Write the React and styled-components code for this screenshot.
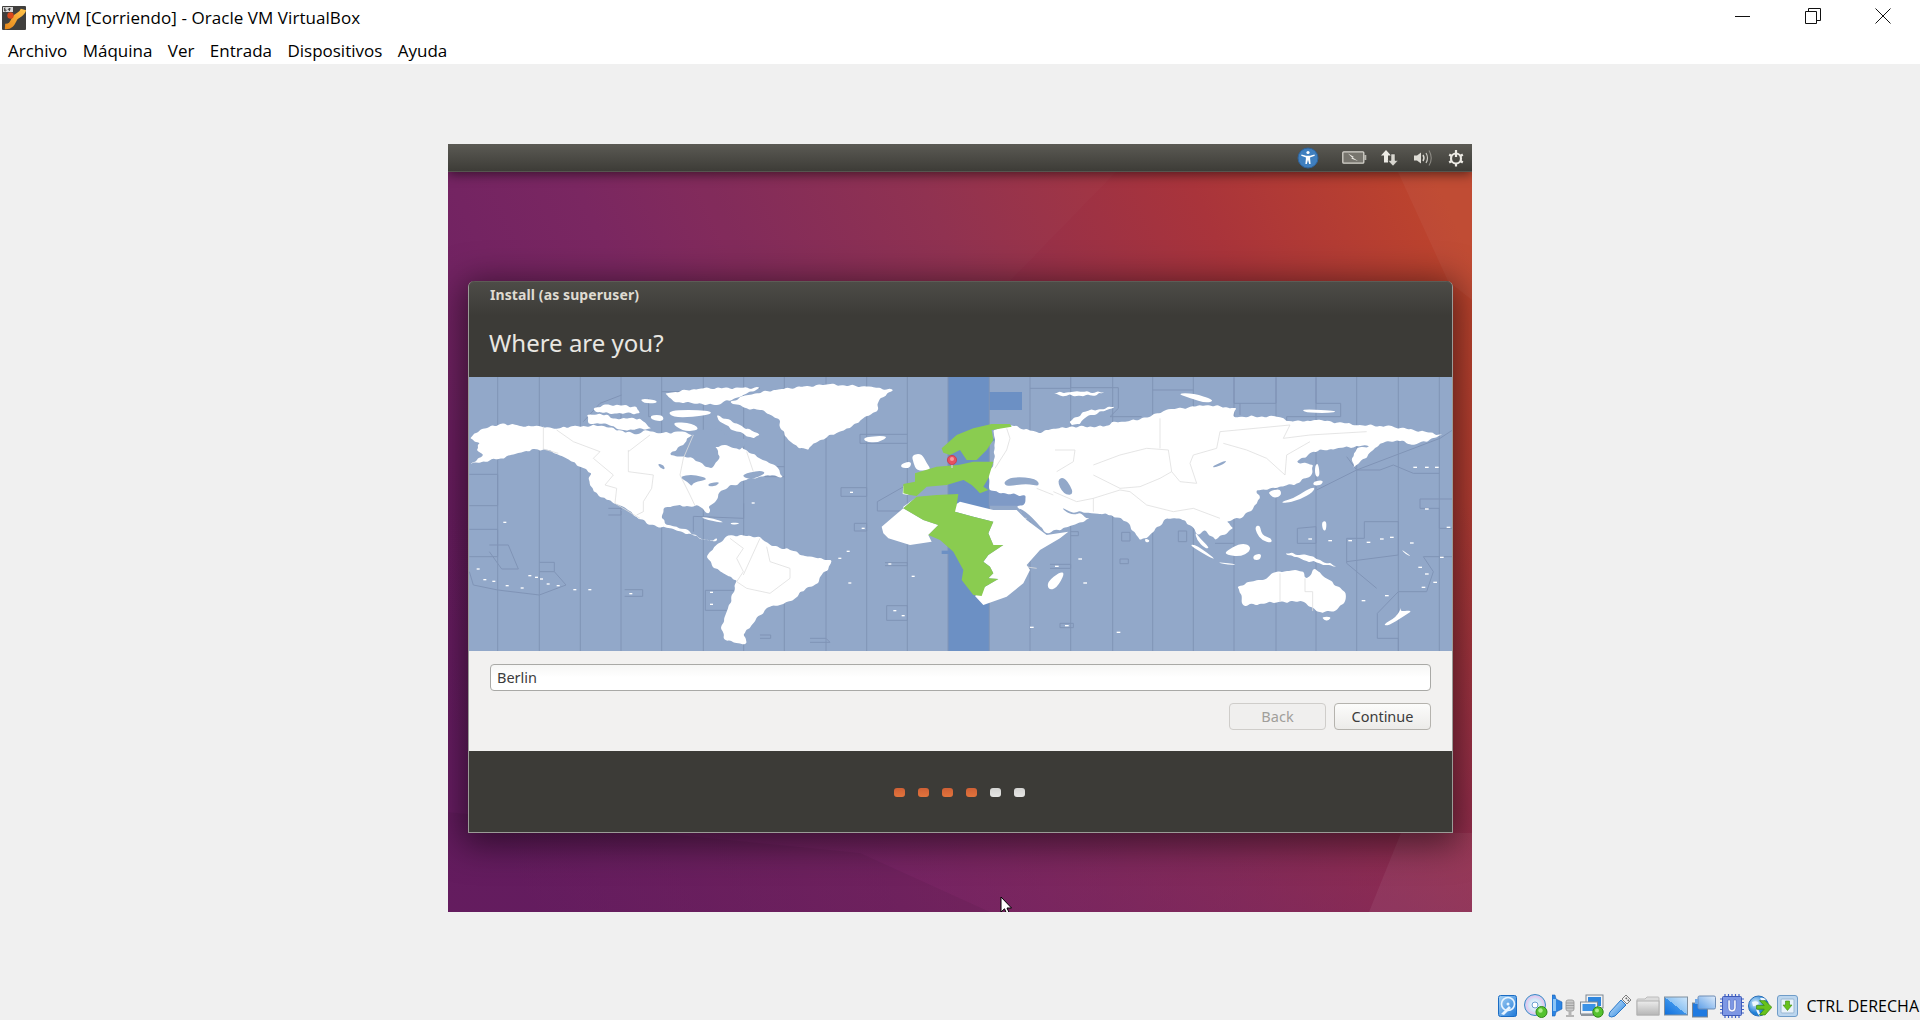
import React from "react";
import styled, { createGlobalStyle } from "styled-components";

const Global = createGlobalStyle`
  html, body { margin: 0; padding: 0; background: #f0f0f0; }
  #root { width: 1920px; height: 1020px; overflow: hidden; }
`;

const Page = styled.div`
  width: 1920px; height: 1020px; display: flex; flex-direction: column;
  background: #f0f0f0; font-family: "Open Sans", "Noto Sans", sans-serif; color: #000;
`;
const Header = styled.header`
  height: 64px; flex: none; background: #fff; display: flex; flex-direction: column;
`;
const TitleBar = styled.div`
  height: 35px; display: flex; align-items: center; padding: 0 0 0 2px; gap: 5px;
`;
const TitleText = styled.div`
  font-size: 17px; line-height: 22px; flex: 1; margin-top: 1px; letter-spacing: .06px;
`;
const WinButtons = styled.div`
  display: flex; margin-top: -3px; padding-right: 2px;
`;
const WinButton = styled.div`
  width: 70px; height: 32px; display: flex; align-items: center; justify-content: center;
`;
const MenuBar = styled.nav`
  display: flex; gap: 15.4px; padding-left: 8px; height: 29px; align-items: center;
`;
const MenuItem = styled.span`
  font-size: 17px; line-height: 22px; margin-top: 2px;
`;
const Stage = styled.main`
  flex: 1; display: flex; justify-content: center; padding-top: 80px;
`;
const Screen = styled.section`
  position: relative; width: 1024px; height: 768px; display: flex; flex-direction: column;
  font-family: "Noto Sans", "Open Sans", sans-serif; overflow: hidden; background: #7f2550;
`;
const Wallpaper = styled.svg`
  position: absolute; inset: 0; width: 100%; height: 100%;
`;
const Panel = styled.div`
  position: relative; height: 28px; flex: none; display: flex; align-items: center; justify-content: flex-end;
  background: linear-gradient(#5b5a54, #3d3c37);
  border-bottom: 1px solid #56554f; box-sizing: border-box;
  box-shadow: 0 2px 12px rgba(0,0,0,.55); padding-right: 7px; gap: 14px;
`;
const A11ySlot = styled.span`
  display: flex; margin-right: 9px;
`;
const Dialog = styled.div`
  position: relative; width: 985px; height: 552px; margin: 109px 0 0 20px; flex: none;
  display: flex; flex-direction: column; box-sizing: border-box;
  border-radius: 6px 6px 0 0; border: 1px solid #9b9b97; border-top: none;
  box-shadow: 0 6px 34px 6px rgba(0,0,0,.5); background: #3c3b37;
`;
const DialogHead = styled.div`
  height: 96px; flex: none; box-sizing: border-box; padding: 4px 0 0 21px;
  border-radius: 6px 6px 0 0; color: #e8e6e1;
  background: linear-gradient(#4d4c47 0, #3c3b37 34px);
  border-top: 1px solid #5d5c56;
`;
const WindowTitle = styled.div`
  font-size: 14px; font-weight: 700; line-height: 18px; letter-spacing: .1px; color: #dfdbd2;
`;
const Heading = styled.h1`
  margin: 23px 0 0 -1px; font-size: 24px; font-weight: 400; line-height: 32px; color: #e9e7e2;
`;
const MapFrame = styled.svg`
  display: block; width: 983px; height: 274px; flex: none; background: #92a8c9; filter: blur(.35px);
`;
const Form = styled.div`
  height: 100px; flex: none; box-sizing: border-box; background: #f2f1f0;
  padding: 13px 21px 0 21px; display: flex; flex-direction: column; gap: 12px;
`;
const Entry = styled.div`
  height: 27px; box-sizing: border-box; border: 1px solid #a9a9a6; border-radius: 4px;
  background: linear-gradient(#f6f6f5, #fff 50%); padding-left: 6px;
  font-size: 14.5px; line-height: 25px; color: #3c3c3c;
`;
const Buttons = styled.div`
  display: flex; justify-content: flex-end; gap: 8px;
`;
const Button = styled.div`
  width: 97px; height: 27px; box-sizing: border-box; border-radius: 4px; text-align: center;
  font-size: 14.5px; line-height: 25px;
  border: 1px solid ${p => (p.$disabled ? "#cfcdca" : "#b5b3ae")};
  color: ${p => (p.$disabled ? "#a09e9a" : "#3c3c3c")};
  background: ${p => (p.$disabled ? "#f0efee" : "linear-gradient(#fcfcfb, #ecebe9)")};
`;
const Footer = styled.div`
  flex: 1; display: flex; align-items: center; justify-content: center; gap: 13px; background: #3c3b37;
  padding-right: 3px; padding-top: 2px;
`;
const Dot = styled.span`
  width: 11px; height: 9px; border-radius: 3px;
  background: ${p => (p.$done ? "linear-gradient(#cf6035, #e2743c)" : "linear-gradient(#d4d4d2, #e6e6e4)")};
`;
const Cursor = styled.svg`
  position: absolute; left: 552px; top: 752px; width: 14px; height: 20px;
`;
const StatusBar = styled.footer`
  height: 35px; flex: none; display: flex; justify-content: flex-end; align-items: center; gap: 4px; padding-right: 1px;
`;
const StatusIcon = styled.svg`
  width: 24px; height: 24px; flex: none; margin-top: 6px;
`;
const HostKey = styled.span`
  font-size: 16px; line-height: 22px; margin: 7px 0 0 2px;
`;

const pts = a => a.flat().join(" ");

// coast: break each edge into short wobbling steps and round the corners
function coast(p, seed = 1) {
  const perimeter = p.reduce((s, a, i) => {
    const b = p[(i + 1) % p.length];
    return s + Math.hypot(b[0] - a[0], b[1] - a[1]);
  }, 0);
  const amp = perimeter > 300 ? 3 : 0;
  const out = [];
  p.forEach((a, i) => {
    const b = p[(i + 1) % p.length];
    const dx = b[0] - a[0], dy = b[1] - a[1], len = Math.hypot(dx, dy) || 1;
    const n = amp ? Math.max(1, Math.ceil(len / 11)) : 1;
    for (let k = 0; k < n; k++) {
      const t = k / n;
      const w = k === 0 ? 0 : amp * (Math.sin(k * 2.3 + i * 1.1 + seed) + Math.sin(k * 5.1 + i + seed) * .6);
      out.push([a[0] + dx * t - (dy / len) * w, a[1] + dy * t + (dx / len) * w]);
    }
  });
  const mid = (a, b) => [(a[0] + b[0]) / 2, (a[1] + b[1]) / 2];
  const f = v => v.toFixed(1);
  const first = mid(out[out.length - 1], out[0]);
  let d = `M${f(first[0])} ${f(first[1])}`;
  out.forEach((c, i) => {
    const m = mid(c, out[(i + 1) % out.length]);
    d += `Q${f(c[0])} ${f(c[1])} ${f(m[0])} ${f(m[1])}`;
  });
  return d + "Z";
}
const Land = ({ p, seed, f = "#fff" }) => <path d={coast(p, seed)} fill={f} />;
const Poly = ({ p, f = "#fff" }) => <polygon points={pts(p)} fill={f} />;

const zones = [497.7, 539.3, 580.3, 621, 661.7, 703.3, 743.7, 784.3, 826, 866.7, 907.3, 948, 989.3, 1030, 1070.7, 1112.7, 1152.7, 1193.3, 1234, 1276, 1316, 1356.7, 1398.3, 1439.3];

const leftJogs = [
  [[28,298],[113,298],[113,392],[28,392]], [[28,463],[113,463],[113,545],[28,545]], [[88,510],[145,510],[175,582],[125,582],[88,530]],
  [[238,562],[283,562],[283,590],[238,590]], [[28,590],[40,630],[113,645],[238,660],[318,630],[283,590]], [[445,400],[483,400],[483,420],[445,420]],
  [[494,644],[548,644],[548,664],[494,664]], [[736,646],[822,646]], [[736,646],[736,706],[800,706]], [[900,780],[932,780],[932,790],[900,790]],
  [[1050,790],[1098,790],[1110,802],[1050,802]], [[1143,338],[1220,338],[1220,364],[1143,364],[1143,338]], [[1252,380],[1340,330]], [[1252,380],[1252,408],[1340,408]],
  [[1183,445],[1220,445],[1220,468],[1183,468],[1183,445]], [[1275,563],[1342,563],[1342,572],[1275,572]], [[1280,692],[1342,692],[1342,736],[1280,736],[1280,692]],
  [[1200,178],[1342,178]], [[1200,178],[1200,205],[1342,205]], [[700,424],[851,430],[851,385]], [[700,424],[700,470]], [[370,140],[420,85],[485,60]], [[605,50],[730,50]],
  [[566,70],[566,125],[605,125]], [[851,40],[900,40]], [[915,275],[973,275]], [[915,275],[915,305],[973,305]],
];
const rightJogs = [
  [[210,40],[332,40]], [[332,8],[332,38],[475,38],[475,100],[450,125],[545,125]], [[578,45],[700,45]], [[822,8],[822,85],[948,85],[948,8]],
  [[1068,8],[1068,85],[1142,85],[1142,125],[980,125],[980,150]], [[840,85],[840,120]], [[1190,285],[1260,285],[1300,270],[1360,295],[1438,295]], [[1190,285],[1440,190],[1478,165]],
  [[1160,245],[1190,285]], [[1070,345],[1190,285]], [[1012,460],[1068,455],[1068,505],[1012,505],[1012,460]], [[1213,440],[1315,440],[1315,540],[1160,560]],
  [[1213,440],[1213,490],[1160,490],[1160,565],[1250,640]], [[1380,372],[1478,372]], [[1380,372],[1380,400],[1438,400],[1438,460],[1478,460]], [[1390,545],[1478,545]], [[1390,545],[1420,590],[1400,650],[1315,650]],
  [[1252,715],[1315,650]], [[1252,715],[1252,790],[1315,790],[1315,828]], [[300,745],[340,745],[340,758],[300,758],[300,745]], [[270,568],[332,568],[332,580],[270,580]],
  [[332,470],[355,470],[355,482],[332,482]], [[765,505],[822,505]], [[485,472],[510,472],[510,498],[485,498],[485,472]], [[655,468],[680,468],[680,500],[655,500],[655,468]],
  [[480,552],[505,552],[505,566],[480,566],[480,552]],
];

const leftLand = [
  [[30,190],[60,165],[125,145],[175,152],[245,155],[295,160],[330,155],[420,152],[480,165],[525,178],[560,165],[600,175],[660,170],[700,180],[760,170],[860,225],[900,250],[945,270],[970,305],[920,300],[860,315],[820,330],[780,350],[770,375],[745,395],[748,415],[735,410],[720,395],[650,392],[610,400],[605,430],[620,450],[650,455],[690,470],[720,490],[760,497],[772,490],[770,498],[745,497],[700,482],[640,462],[570,450],[530,425],[490,395],[440,375],[400,350],[385,310],[395,295],[360,275],[310,245],[260,225],[225,222],[170,235],[120,250],[30,268],[70,240],[50,225],[60,205]],
  [[380,120],[440,118],[460,130],[540,130],[575,160],[490,165],[430,145],[385,145]],
  [[400,100],[440,88],[530,95],[540,115],[470,115],[410,112]],
  [[540,70],[590,75],[590,85],[550,85]],
  [[615,55],[720,40],[900,38],[850,60],[770,90],[700,85],[640,80]],
  [[570,120],[610,120],[610,140],[575,135]],
  [[620,105],[750,105],[755,120],[640,130]],
  [[630,140],[700,145],[720,165],[670,170]],
  [[770,120],[840,150],[900,180],[880,190],[830,170],[780,140]],
  [[810,80],[860,60],[960,42],[1100,28],[1220,35],[1300,45],[1260,70],[1250,110],[1210,130],[1170,160],[1160,160],[1060,205],[1045,225],[1015,220],[985,195],[965,165],[955,130],[900,105],[850,98]],
  [[1210,185],[1290,182],[1255,203],[1215,200]],
  [[1355,240],[1385,235],[1400,265],[1415,285],[1370,288],[1360,262]],
  [[1325,265],[1355,258],[1350,280],[1322,278]],
  [[740,545],[770,510],[810,480],[900,485],[930,510],[990,525],[1040,545],[1115,555],[1105,585],[1085,600],[1075,625],[1020,650],[1005,670],[960,690],[930,695],[900,720],[880,745],[850,780],[860,805],[830,805],[790,790],[785,750],[800,710],[825,640],[830,615],[790,595],[755,570]],
  [[720,425],[760,430],[800,445],[740,435]], [[810,442],[845,445],[815,450]], [[735,395],[740,395],[745,412],[738,410]],
];
const leftWater = [
  [[630,235],[670,210],[680,190],[720,165],[770,160],[800,180],[830,190],[870,190],[840,225],[790,210],[765,215],[780,245],[755,280],[735,275],[700,250],[665,245],[640,240]],
  [[655,305],[700,298],[750,312],[700,322],[695,335],[685,322]], [[745,325],[780,320],[770,332],[745,335]], [[592,265],[612,270],[615,285],[600,278]],
  [[840,300],[900,285],[920,295],[870,315]], [[475,395],[505,425],[490,415]],
];
const leftBorders = [
  [[250,155],[250,222],[295,235]], [[290,165],[340,200],[420,230],[400,250],[460,300],[435,330],[470,340],[465,385]], [[505,225],[505,290],[580,300],[575,340],[550,380],[550,410],[530,420]],
  [[570,180],[505,230]], [[700,180],[670,250],[660,300],[690,360],[705,392]], [[465,385],[540,430]], [[810,490],[850,520],[830,550],[850,590],[830,620],[860,640],[930,655],[990,610],[990,580],[930,560],[920,515]],
  [[850,600],[900,490]], [[860,230],[880,290]],
];
const rightLand = [
  [[100,165],[150,150],[240,175],[265,165],[330,155],[430,155],[465,140],[500,140],[570,125],[620,105],[740,90],[830,100],[820,125],[950,125],[1000,140],[1070,135],[1200,150],[1300,155],[1450,180],[1360,210],[1310,195],[1260,205],[1240,225],[1180,280],[1175,250],[1190,220],[1240,210],[1130,220],[1060,230],[1010,260],[1060,270],[1055,300],[1010,325],[980,330],[920,345],[890,345],[900,370],[880,400],[850,425],[800,440],[820,460],[765,495],[735,465],[715,480],[690,450],[660,430],[620,430],[560,490],[540,495],[500,440],[455,420],[400,415],[340,410],[390,430],[340,450],[260,475],[170,395],[195,385],[197,362],[140,356],[88,345],[88,290],[100,265],[105,200]],
  [[328,140],[375,110],[465,95],[440,105],[380,125],[360,148],[335,150]], [[280,55],[340,50],[435,52],[400,62],[300,62]], [[650,55],[700,55],[765,75],[740,85],[690,70]],
  [[1025,102],[1140,108],[1100,115],[1035,112]], [[965,380],[1000,370],[1040,345],[1065,335],[1060,350],[1020,375],[970,385]], [[1060,320],[1090,315],[1085,330],[1060,332]], [[1065,270],[1075,265],[1080,305],[1065,305]],
  [[925,350],[960,340],[965,360],[945,370],[930,360]], [[885,455],[900,450],[905,480],[935,490],[935,505],[905,495],[890,475]], [[685,508],[710,510],[770,555],[745,545]], [[770,560],[840,570],[790,568]],
  [[795,530],[840,505],[870,510],[870,530],[840,545],[800,540]], [[880,540],[905,535],[900,555],[880,555]], [[975,535],[1040,540],[1130,575],[1080,565],[1030,555]], [[705,470],[720,490],[750,520],[735,520],[710,495]],
  [[555,490],[570,495],[565,503],[555,500]], [[262,620],[300,590],[315,595],[290,640],[265,645]],
  [[832,635],[870,620],[920,610],[935,595],[1000,585],[1030,590],[1040,610],[1065,580],[1100,610],[1155,650],[1155,680],[1120,710],[1070,710],[1030,680],[960,680],[850,692],[845,660]],
  [[1085,725],[1115,725],[1105,738],[1092,735]], [[1320,710],[1360,705],[1330,725],[1285,752],[1268,750],[1310,725],[1325,695]],
  [[1085,440],[1100,438],[1098,468],[1088,465]], [[1320,520],[1355,545],[1340,540]],
];
const rightWater = [
  [[130,320],[160,305],[230,310],[240,335],[200,325],[140,335]], [[290,315],[315,305],[345,360],[310,358]], [[755,275],[800,255],[795,265],[765,278]],
  [[300,395],[340,415],[365,415],[330,420]], [[170,395],[205,415],[255,470],[235,460],[195,425]],
];
const rightBorders = [
  [[140,160],[150,190],[140,225],[105,280]], [[285,225],[345,225],[340,260],[290,290]], [[400,270],[480,240],[560,220],[625,225],[635,290],[600,310],[540,335],[480,340],[400,300]],
  [[780,170],[770,220],[700,240],[690,265],[710,325],[660,320],[635,290]], [[790,205],[860,225],[920,250],[975,300],[980,240],[1050,200]], [[400,370],[480,345],[510,350],[560,390],[640,410],[700,400],[780,430]],
  [[600,130],[600,220]], [[780,170],[990,150],[970,190],[1050,180],[1220,170]], [[280,350],[350,380],[400,370],[400,410]], [[105,430],[200,430]], [[140,520],[160,570],[230,580]], [[960,595],[960,680]], [[1035,610],[1035,650],[1058,650],[1058,708]],
  [[230,340],[280,360]],
];
const bandWater = [
  [[95,185],[105,195],[60,222],[35,250],[20,255],[50,210]],
];
const medWater = [[88,340],[200,355],[200,392],[88,392]];
const euroGreen = [
  [[245,115],[290,75],[340,55],[395,42],[450,42],[455,50],[395,60],[400,90],[380,120],[350,150],[320,150],[300,120],[270,135],[250,128]],
  [[130,222],[165,215],[165,190],[230,170],[295,165],[340,155],[400,155],[385,205],[370,230],[385,240],[360,250],[340,230],[310,210],[260,225],[200,230],[170,258],[150,255],[130,250]],
  [[130,295],[170,260],[230,255],[295,252],[290,285],[285,305],[340,320],[400,335],[385,370],[400,405],[430,405],[385,435],[370,455],[390,470],[400,490],[385,505],[415,507],[375,530],[365,558],[340,555],[305,510],[310,480],[280,425],[240,390],[205,375],[235,345],[190,330]],
];
const euroWhite = [
  [[65,350],[100,320],[130,295],[190,330],[235,345],[205,375],[215,395],[150,405],[85,385],[70,370]], [[130,290],[165,265],[130,295]], [[130,228],[148,228],[145,255],[128,252]],
  [[285,285],[300,275],[400,300],[470,300],[500,330],[560,375],[625,365],[600,385],[540,420],[500,465],[510,480],[490,520],[440,560],[370,585],[345,558],[375,530],[415,507],[385,505],[400,490],[390,470],[370,455],[385,435],[430,405],[400,405],[385,370],[400,335],[340,320],[285,305]],
];

function WorldMap() {
  return (
    <MapFrame viewBox="469 377 983 274">
      <rect x="948" y="377" width="41" height="274" fill="#6c90c4" />
      <rect x="989" y="392" width="33" height="18" fill="#6c90c4" />
      {zones.map(x => <line key={x} x1={x} x2={x} y1="377" y2="651" stroke="#8094b6" strokeWidth="1" />)}
      <g transform="translate(460 375) scale(.33333)" fill="none" stroke="#8094b6" strokeWidth="3">
        {leftJogs.map((p, i) => <polyline key={i} points={pts(p)} />)}
      </g>
      <g transform="translate(960 375) scale(.33333)" fill="none" stroke="#8094b6" strokeWidth="3">
        {rightJogs.map((p, i) => <polyline key={i} points={pts(p)} />)}
      </g>
      <g transform="translate(460 375) scale(.33333)">
        {leftLand.map((p, i) => <Land key={i} p={p} seed={i + 1} />)}
        {leftWater.map((p, i) => <Land key={i} p={p} seed={i + 3} f="#92a8c9" />)}
        <g fill="none" stroke="#dedede" strokeWidth="2.4">
          {leftBorders.map((p, i) => <polyline key={i} points={pts(p)} />)}
        </g>
        <g fill="#fff">
          {[[70,612],[97,617],[137,630],[182,637],[205,600],[225,605],[240,610],[260,625],[290,630],[340,642],[385,642],[50,580],[130,440],[875,382],[1160,527],[1135,548],[1165,622],[1355,602],[1285,565],[1300,705],[1325,720],[750,650],[750,686],[508,654],[1205,458],[1170,350]].map(([x,y]) => <rect key={x+"-"+y} x={x} y={y} width="9" height="4" />)}
        </g>
      </g>
      <g transform="translate(960 375) scale(.33333)">
        <Poly p={medWater} f="#7f9ac6" />
        {bandWater.map((p, i) => <Poly key={i} p={p} f="#6c90c4" />)}
        {rightLand.map((p, i) => <Land key={i} p={p} seed={i + 5} />)}
        {rightWater.map((p, i) => <Land key={i} p={p} seed={i + 2} f="#92a8c9" />)}
        <g fill="none" stroke="#dedede" strokeWidth="2.4">
          {rightBorders.map((p, i) => <polyline key={i} points={pts(p)} />)}
        </g>
        <g fill="#fff">
          {[[1045,490],[1105,495],[1165,495],[1220,500],[1260,490],[1290,485],[1350,502],[1375,575],[1395,595],[1420,620],[1385,635],[1440,545],[1360,275],[1395,275],[1425,275],[1395,400],[1460,455],[1275,660],[1205,675],[355,550],[285,572],[370,622],[315,750],[470,770],[210,755]].map(([x,y]) => <rect key={x+"-"+y} x={x} y={y} width="11" height="4" />)}
        </g>
      </g>
      <g transform="translate(860 410) scale(.33333)">
        {euroWhite.map((p, i) => <Poly key={i} p={p} />)}
        {euroGreen.map((p, i) => <Poly key={i} p={p} f="#8acc50" />)}
        <polygon points="310,210 335,225 355,245 340,245 310,222" fill="#6c90c4" />
        <polygon points="245,432 268,432 268,422 245,422" fill="#6c90c4" />
      </g>
      <rect x="951.3" y="461" width="1.4" height="7" fill="#cfcfcf" />
      <circle cx="952" cy="460" r="4.6" fill="#e8505f" stroke="#c93a48" strokeWidth=".8" />
      <circle cx="952" cy="459" r="2" fill="#f59aa0" />
    </MapFrame>
  );
}

const DiskIcon = () => (
  <StatusIcon viewBox="0 0 24 24">
    <defs><linearGradient id="dk" x1="0" y1="0" x2="1" y2="1"><stop offset="0" stopColor="#a9d4f5" /><stop offset="1" stopColor="#1e78d8" /></linearGradient></defs>
    <rect x="2.5" y="1.5" width="18" height="21" rx="2" fill="url(#dk)" stroke="#1a6cc4" />
    <circle cx="12" cy="10" r="6.5" fill="none" stroke="#e8f4ff" strokeWidth="1.6" />
    <circle cx="12" cy="10" r="1.5" fill="#e8f4ff" />
    <path d="M5 20 L13 12 L15 14 L8 21 Z" fill="#e8f4ff" />
  </StatusIcon>
);
const CdIcon = () => (
  <StatusIcon viewBox="0 0 24 24">
    <defs><radialGradient id="cd"><stop offset="0" stopColor="#fff" /><stop offset=".6" stopColor="#cfe6f7" /><stop offset=".8" stopColor="#e5c9ef" /><stop offset="1" stopColor="#b6d6ee" /></radialGradient></defs>
    <circle cx="11" cy="11" r="10.5" fill="url(#cd)" stroke="#3f86c6" />
    <circle cx="11" cy="11" r="3" fill="#fff" stroke="#6aa0cf" />
    <circle cx="17.5" cy="18" r="5.5" fill="#55c22f" stroke="#2f8a18" />
    <circle cx="16.5" cy="16.5" r="2.2" fill="#b0ee8c" />
  </StatusIcon>
);
const AudioIcon = () => (
  <StatusIcon viewBox="0 0 24 24">
    <path d="M0 1 L3 1 L4 5 L10 8 L10 15 L4 18 L3 22 L0 22 Z" fill="#2c84e2" stroke="#1a62b8" strokeWidth=".6" />
    <rect x="1" y="5" width="3" height="12" fill="#8cc5f6" />
    <rect x="14" y="6" width="8" height="11" rx="2" fill="#c9c9c9" stroke="#a2a2a2" />
    <path d="M14 9h8M14 11.5h8M14 14h8" stroke="#8e8e8e" strokeWidth=".7" />
    <rect x="16.5" y="17" width="3" height="4" fill="#b5b5b5" /><rect x="14" y="21" width="8" height="2" fill="#b5b5b5" />
  </StatusIcon>
);
const NetIcon = () => (
  <StatusIcon viewBox="0 0 24 24">
    <rect x="6" y="1" width="17" height="13" fill="#eef2f6" stroke="#7e8791" />
    <rect x="8" y="3" width="13" height="9" fill="#2e86de" />
    <rect x=".5" y="8" width="17" height="12" fill="#eef2f6" stroke="#7e8791" />
    <rect x="2.5" y="10" width="13" height="7" fill="#3a92e6" />
    <rect x="1" y="20" width="16" height="2" fill="#8d959d" />
    <circle cx="18" cy="18" r="5.2" fill="#55c22f" stroke="#2f8a18" />
    <circle cx="17" cy="16.5" r="2" fill="#b0ee8c" />
  </StatusIcon>
);
const UsbIcon = () => (
  <StatusIcon viewBox="0 0 24 24">
    <defs><linearGradient id="us" x1="0" y1="0" x2="1" y2="1"><stop offset="0" stopColor="#d9eefc" /><stop offset="1" stopColor="#1e7fe0" /></linearGradient></defs>
    <path d="M2 18 L13 6 L18 11 L7 22 Q3 24 1 22 Q1 20 2 18 Z" fill="url(#us)" stroke="#2a78c8" />
    <path d="M14 5 L18 1 L23 6 L19 10 Z" fill="#f1f1f1" stroke="#7f7f7f" />
    <rect x="17.5" y="3.5" width="1.6" height="1.6" fill="#666" transform="rotate(45 18.3 4.3)" /><rect x="19.5" y="5.5" width="1.6" height="1.6" fill="#666" transform="rotate(45 20.3 6.3)" />
  </StatusIcon>
);
const FolderIcon = () => (
  <StatusIcon viewBox="0 0 24 24">
    <defs><linearGradient id="fd" x1="0" y1="0" x2="0" y2="1"><stop offset="0" stopColor="#ececec" /><stop offset="1" stopColor="#b6b6b6" /></linearGradient></defs>
    <path d="M1 6 Q1 5 2 5 L9 5 L11 3 L22 3 Q23 3 23 4 L23 21 L1 21 Z" fill="#dcdcdc" stroke="#bdbdbd" />
    <rect x="1" y="7" width="22" height="14" fill="url(#fd)" stroke="#b0b0b0" />
  </StatusIcon>
);
const ScreenIcon = () => (
  <StatusIcon viewBox="0 0 24 24">
    <defs><linearGradient id="sc" x1="0" y1="1" x2="1" y2="0"><stop offset="0" stopColor="#0f6fdc" /><stop offset=".5" stopColor="#3a92ea" /><stop offset=".5" stopColor="#8ec4f4" /><stop offset="1" stopColor="#cfe6fa" /></linearGradient></defs>
    <rect x=".5" y="3" width="23" height="18" fill="url(#sc)" stroke="#7f8f9f" />
  </StatusIcon>
);
const MultiIcon = () => (
  <StatusIcon viewBox="0 0 24 24">
    <defs><linearGradient id="mu" x1="0" y1="1" x2="1" y2="0"><stop offset="0" stopColor="#5d9fe8" /><stop offset="1" stopColor="#e0ecfa" /></linearGradient></defs>
    <rect x=".5" y="9" width="15" height="14" fill="#1f7ae0" stroke="#7e8791" />
    <rect x="6" y="2" width="17.5" height="13" rx="1.5" fill="url(#mu)" stroke="#6f8db5" />
    <rect x="3" y="5" width="3" height="5" fill="#6fa8e8" />
  </StatusIcon>
);
const ChipIcon = () => (
  <StatusIcon viewBox="0 0 24 24">
    <path d="M5 0v24M8.500 0v24M12 0v24M15.500 0v24M19 0v24M0 5h24M0 8.500h24M0 12h24M0 15.500h24M0 19h24" stroke="#3f63c8" strokeWidth="1.2" />
    <rect x="2.500" y="2.500" width="19" height="19" rx="1" fill="#7d97e4" stroke="#3f5bb8" />
    <path d="M8 6 V14 Q8 18 12 18 Q16 18 16 14 V6 L13.800 6 V14 Q13.800 15.800 12 15.800 Q10.200 15.800 10.200 14 V6 Z" fill="#fff" stroke="#3f5bb8" strokeWidth=".5" />
  </StatusIcon>
);
const GlobeIcon = () => (
  <StatusIcon viewBox="0 0 24 24">
    <defs><radialGradient id="gl" cx=".35" cy=".35"><stop offset="0" stopColor="#d9effc" /><stop offset="1" stopColor="#1f7fd8" /></radialGradient></defs>
    <circle cx="10.500" cy="12" r="10" fill="url(#gl)" stroke="#2a6eb5" />
    <path d="M4 8 Q9 6 11 9 Q8 13 5 12 Z M12 4 Q16 3 18 6 L14 8 Z M8 15 Q12 15 12 22 Q9 20 8 15 Z" fill="#eef7fd" />
    <path d="M11 7 L17 7 L24 14 L17 22 L11 22 L16 16 L8 16 L8 12 L16 12 Z" fill="#68c21c" stroke="#3c8a10" strokeWidth=".8" transform="translate(1 0) scale(.95)" />
  </StatusIcon>
);
const SaveIcon = () => (
  <StatusIcon viewBox="0 0 24 24">
    <rect x="1.500" y="1.500" width="20" height="21" rx="2.500" fill="#bcd6ee" stroke="#6f9cc8" />
    <rect x="5" y="5" width="13" height="14" rx="1" fill="#e9f2fa" stroke="#9ab8d3" />
    <path d="M9.500 7 H13.500 V11 H16 L11.500 16.500 L7 11 H9.500 Z" fill="#68c21c" stroke="#3c8a10" strokeWidth=".6" />
  </StatusIcon>
);

const AppLogo = () => (
  <svg width="24" height="24" viewBox="0 0 24 24">
    <defs><linearGradient id="lg" x1="0" y1="1" x2="1" y2="0"><stop offset="0" stopColor="#e8891a" /><stop offset="1" stopColor="#ffc24a" /></linearGradient></defs>
    <rect width="24" height="24" rx="1" fill="#403f3d" />
    <path d="M3 20.500 C10 21 11 15 13 12 C15 9 20 9 21.500 3.500" fill="none" stroke="url(#lg)" strokeWidth="5.500" />
    <circle cx="8.500" cy="9.500" r="3.200" fill="#d9481c" />
    <rect x="1" y="1" width="10" height="5" fill="#d8d8d8" />
    <path d="M3.500 2 H2.500 V5 H4 V3.800 H2.800 M8 2 V3.700 H6 L7.500 2 M7.500 2 V5" stroke="#333" strokeWidth=".8" fill="none" />
  </svg>
);

const A11yIcon = () => (
  <svg width="22" height="22" viewBox="0 0 22 22">
    <circle cx="11" cy="11" r="10" fill="#3f7fbf" stroke="#2f639b" />
    <circle cx="11" cy="5.500" r="1.600" fill="#fff" />
    <path d="M4.500 7.500 L9 8.800 H13 L17.500 7.500 L17.800 8.800 L13 10.500 L13.600 17 L12.200 17 L11 12.800 L9.800 17 L8.400 17 L9 10.500 L4.200 8.800 Z" fill="#fff" />
  </svg>
);
const BatteryIcon = () => (
  <svg width="25" height="13" viewBox="0 0 25 13">
    <rect x=".8" y=".8" width="21" height="11.400" rx="1" fill="#77756e" stroke="#d5d3cc" strokeWidth="1.300" />
    <rect x="22.300" y="4" width="2" height="5" fill="#b9b7b0" />
    <path d="M6 2.500 L12 6 L10.500 6.500 L16 10 L9 7.500 L10.500 7 Z" fill="#eceae4" />
  </svg>
);
const ArrowsIcon = () => (
  <svg width="18" height="18" viewBox="0 0 18 18">
    <path d="M5 1 L10 6.500 H7 V13.500 H3 V6.500 H0 Z" fill="#eceae4" />
    <path d="M12 17 L7 11.500 H10 V5 H14 V11.500 H17 Z" fill="#d8d6cf" stroke="#3f3e39" strokeWidth=".5" />
  </svg>
);
const VolumeIcon = () => (
  <svg width="20" height="18" viewBox="0 0 20 18">
    <path d="M1 6.500 H4 L8 3.500 V14.500 L4 11.500 H1 Z" fill="#dedcd5" />
    <path d="M10 6 Q12 9 10 12" fill="none" stroke="#dedcd5" strokeWidth="1.400" />
    <path d="M13 4 Q16 9 13 14" fill="none" stroke="#c8c6bf" strokeWidth="1.200" />
    <path d="M16 1.500 Q20.500 9 16 16.500" fill="none" stroke="#8d8b85" strokeWidth="1.100" />
  </svg>
);
const GearIcon = () => (
  <svg width="18" height="18" viewBox="0 0 18 18">
    <circle cx="9" cy="9.500" r="5" fill="none" stroke="#eceae4" strokeWidth="2.200" />
    <path d="M9 1 V8 M2.200 5.500 L4.500 7 M15.800 5.500 L13.500 7 M2.200 13.500 L4.500 12 M15.800 13.500 L13.500 12 M9 14.500 V17.500" stroke="#eceae4" strokeWidth="2.200" />
  </svg>
);

const menu = ["Archivo", "Máquina", "Ver", "Entrada", "Dispositivos", "Ayuda"];
const dots = [true, true, true, true, false, false];

export default function App() {
  return (
    <Page>
      <Global />
      <Header>
        <TitleBar>
          <AppLogo />
          <TitleText>myVM [Corriendo] - Oracle VM VirtualBox</TitleText>
          <WinButtons>
            <WinButton><svg width="16" height="16"><path d="M0 8.500H15" stroke="#111" /></svg></WinButton>
            <WinButton><svg width="16" height="16"><path d="M.5 3.500H11.500V15.500H.5ZM3.500 3.500V.5H15.500V12.500H11.500" fill="none" stroke="#111" /></svg></WinButton>
            <WinButton><svg width="16" height="16"><path d="M.5 .5L15.500 15.500M15.500 .5L.5 15.500" stroke="#111" /></svg></WinButton>
          </WinButtons>
        </TitleBar>
        <MenuBar>{menu.map(m => <MenuItem key={m}>{m}</MenuItem>)}</MenuBar>
      </Header>
      <Stage>
        <Screen>
          <Wallpaper viewBox="448 144 1024 768">
            <defs>
              <linearGradient id="wp" gradientUnits="userSpaceOnUse" x1="448" y1="720" x2="1472" y2="260">
                <stop offset="0" stopColor="#661b62" />
                <stop offset=".3" stopColor="#78245f" />
                <stop offset=".58" stopColor="#8f2f4f" />
                <stop offset=".8" stopColor="#a9343b" />
                <stop offset="1" stopColor="#be452c" />
              </linearGradient>
              <linearGradient id="wpb" x1="0" y1="0" x2="0" y2="1">
                <stop offset="0" stopColor="#6f2268" stopOpacity="0" />
                <stop offset="1" stopColor="#6f2268" stopOpacity=".45" />
              </linearGradient>
            </defs>
            <rect x="448" y="144" width="1024" height="768" fill="url(#wp)" />
            <rect x="448" y="500" width="1024" height="412" fill="url(#wpb)" />
            <polygon points="448,172 1116,172 1010,281 880,420 448,420" fill="#fff" opacity=".015" />
            <polygon points="1398,172 1472,172 1472,300 1448,281" fill="#fff" opacity=".04" />
            <polygon points="1401,833 1472,833 1472,912 1369,912" fill="#fff" opacity=".06" />
            <polygon points="448,812 860,853 990,912 448,912" fill="#000" opacity=".05" />
          </Wallpaper>
          <Panel>
            <A11ySlot><A11yIcon /></A11ySlot><BatteryIcon /><ArrowsIcon /><VolumeIcon /><GearIcon />
          </Panel>
          <Dialog>
            <DialogHead>
              <WindowTitle>Install (as superuser)</WindowTitle>
              <Heading>Where are you?</Heading>
            </DialogHead>
            <WorldMap />
            <Form>
              <Entry>Berlin</Entry>
              <Buttons>
                <Button $disabled>Back</Button>
                <Button>Continue</Button>
              </Buttons>
            </Form>
            <Footer>{dots.map((d, i) => <Dot key={i} $done={d} />)}</Footer>
          </Dialog>
          <Cursor viewBox="0 0 14 20">
            <path d="M1 1 V16 L4.500 12.800 L7 18.500 L9.500 17.500 L7 12 H11.500 Z" fill="#fff" stroke="#000" strokeWidth="1" />
          </Cursor>
        </Screen>
      </Stage>
      <StatusBar>
        <DiskIcon /><CdIcon /><AudioIcon /><NetIcon /><UsbIcon /><FolderIcon /><ScreenIcon /><MultiIcon /><ChipIcon /><GlobeIcon /><SaveIcon />
        <HostKey>CTRL DERECHA</HostKey>
      </StatusBar>
    </Page>
  );
}
